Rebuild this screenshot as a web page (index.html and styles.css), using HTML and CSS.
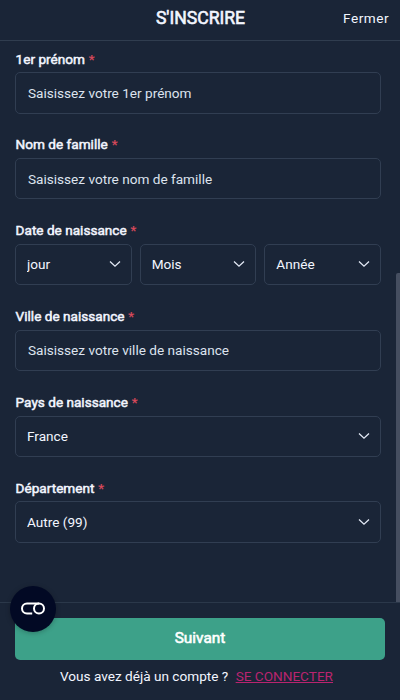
FILE: index.html
```html
<!DOCTYPE html>
<html lang="fr">
<head>
    <meta charset="UTF-8">
    <meta name="viewport" content="width=device-width, initial-scale=1.0">
    <title>S'inscrire</title>
    <link rel="stylesheet" href="styles.css">
</head>
<body>
    <header class="header">
        <h1>S'INSCRIRE</h1>
        <button class="close-btn" type="button">Fermer</button>
    </header>

    <form class="form" id="signup">
        <div class="field">
            <label for="firstname">1er prénom <span class="required">*</span></label>
            <input id="firstname" type="text" placeholder="Saisissez votre 1er prénom">
        </div>
        <div class="field">
            <label for="lastname">Nom de famille <span class="required">*</span></label>
            <input id="lastname" type="text" placeholder="Saisissez votre nom de famille">
        </div>
        <div class="field">
            <label for="day">Date de naissance <span class="required">*</span></label>
            <div class="date-row">
                <div class="select">
                    <select id="day"><option>jour</option></select>
                    <svg class="chevron" viewBox="0 0 12 8"><path d="M1 1.5 L6 6.2 L11 1.5"/></svg>
                </div>
                <div class="select">
                    <select id="month"><option>Mois</option></select>
                    <svg class="chevron" viewBox="0 0 12 8"><path d="M1 1.5 L6 6.2 L11 1.5"/></svg>
                </div>
                <div class="select">
                    <select id="year"><option>Année</option></select>
                    <svg class="chevron" viewBox="0 0 12 8"><path d="M1 1.5 L6 6.2 L11 1.5"/></svg>
                </div>
            </div>
        </div>
        <div class="field">
            <label for="city">Ville de naissance <span class="required">*</span></label>
            <input id="city" type="text" placeholder="Saisissez votre ville de naissance">
        </div>
        <div class="field">
            <label for="country">Pays de naissance <span class="required">*</span></label>
            <div class="select">
                <select id="country"><option>France</option></select>
                <svg class="chevron" viewBox="0 0 12 8"><path d="M1 1.5 L6 6.2 L11 1.5"/></svg>
            </div>
        </div>
        <div class="field">
            <label for="department">Département <span class="required">*</span></label>
            <div class="select">
                <select id="department"><option>Autre (99)</option></select>
                <svg class="chevron" viewBox="0 0 12 8"><path d="M1 1.5 L6 6.2 L11 1.5"/></svg>
            </div>
        </div>
        <div class="scrollbar"></div>
    </form>

    <footer class="footer">
        <button class="next-btn" type="submit" form="signup">Suivant</button>
        <p class="login">Vous avez déjà un compte ? <a href="#">SE CONNECTER</a></p>
        <!-- cookie settings -->
        <button class="cookie-btn" type="button" aria-label="Cookies">
            <svg viewBox="0 0 24 13">
                <path d="M18 1.4 H6 A5 5 0 0 0 6 11.4 H11.2"/>
                <circle cx="18" cy="6.4" r="5"/>
            </svg>
        </button>
    </footer>
</body>
</html>
```

FILE: styles.css
```css
* {
    box-sizing: border-box;
}

body {
    margin: 0;
    height: 100vh;
    display: flex;
    flex-direction: column;
    overflow: hidden;
    background-color: #1a2537;
    color: #f3f6ff;
    font-family: Roboto, "Liberation Sans", sans-serif;
    font-size: 13.6px;
}

button,
input,
select {
    font-family: inherit;
    font-size: inherit;
    letter-spacing: inherit;
    color: inherit;
}

.header {
    height: 41px;
    flex-shrink: 0;
    display: grid;
    grid-template-columns: 1fr auto 1fr;
    align-items: center;
    padding: 0 11px 5px 12px;
    border-bottom: 1px solid #303d4f;
}

.header h1 {
    grid-column: 2;
    margin: 0;
    font-size: 17.6px;
    font-weight: 400;
    -webkit-text-stroke: 0.6px;
}

.close-btn {
    justify-self: end;
    padding: 0;
    background: none;
    border: none;
    letter-spacing: 0.5px;
}

.form {
    position: relative;
    flex: 1;
    padding: 7.5px 19px 0 15px;
}

.field {
    margin-bottom: 20.9px;
}

.field label {
    display: block;
    height: 20px;
    margin-bottom: 3.5px;
    padding-left: 0.6px;
    line-height: 20px;
    -webkit-text-stroke: 0.5px;
}

.required {
    margin-left: 0.5px;
    color: #d94a5c;
    -webkit-text-stroke: 0.2px;
}

.field input,
.field select {
    display: block;
    width: 100%;
    height: 41.5px;
    padding: 0 12px;
    background-color: transparent;
    border: 1px solid #313e52;
    border-radius: 5px;
    outline: none;
    appearance: none;
}

.field select {
    padding: 0 11px 1px;
}

.field input::placeholder {
    color: #dde3ee;
    opacity: 1;
}

.date-row {
    display: grid;
    grid-template-columns: repeat(3, 1fr);
    gap: 8px;
}

.select {
    position: relative;
}

.chevron {
    position: absolute;
    right: 11px;
    top: 16.5px;
    width: 12px;
    height: 8px;
    fill: none;
    stroke: #e3e9f5;
    stroke-width: 1.3;
    pointer-events: none;
}

.scrollbar {
    position: absolute;
    top: 232px;
    right: 0;
    bottom: 0;
    width: 4px;
    background-color: #454e60;
    border-radius: 2px 0 0 0;
}

.footer {
    position: relative;
    height: 98px;
    flex-shrink: 0;
    padding: 15px 15px 0;
    border-top: 1px solid #2b384a;
}

.next-btn {
    display: block;
    width: 100%;
    height: 41.5px;
    padding: 0 0 2px;
    background-color: #3da189;
    border: none;
    border-radius: 5px;
    color: #fff;
    font-size: 15.4px;
    -webkit-text-stroke: 0.6px;
}

.login {
    margin: 6px 0 0;
    padding-right: 7px;
    line-height: 20px;
    text-align: center;
}

.login a {
    margin-left: 4px;
    color: #b9246f;
}

.cookie-btn {
    position: absolute;
    left: 10px;
    top: -17.5px;
    width: 46px;
    height: 46px;
    display: flex;
    align-items: center;
    justify-content: center;
    padding: 0;
    background-color: #020924;
    border: none;
    border-radius: 50%;
    box-shadow: 0 1px 5px rgba(0, 0, 0, 0.25);
}

.cookie-btn svg {
    width: 24px;
    height: 13px;
    fill: none;
    stroke: #fff;
    stroke-width: 2;
}
```
